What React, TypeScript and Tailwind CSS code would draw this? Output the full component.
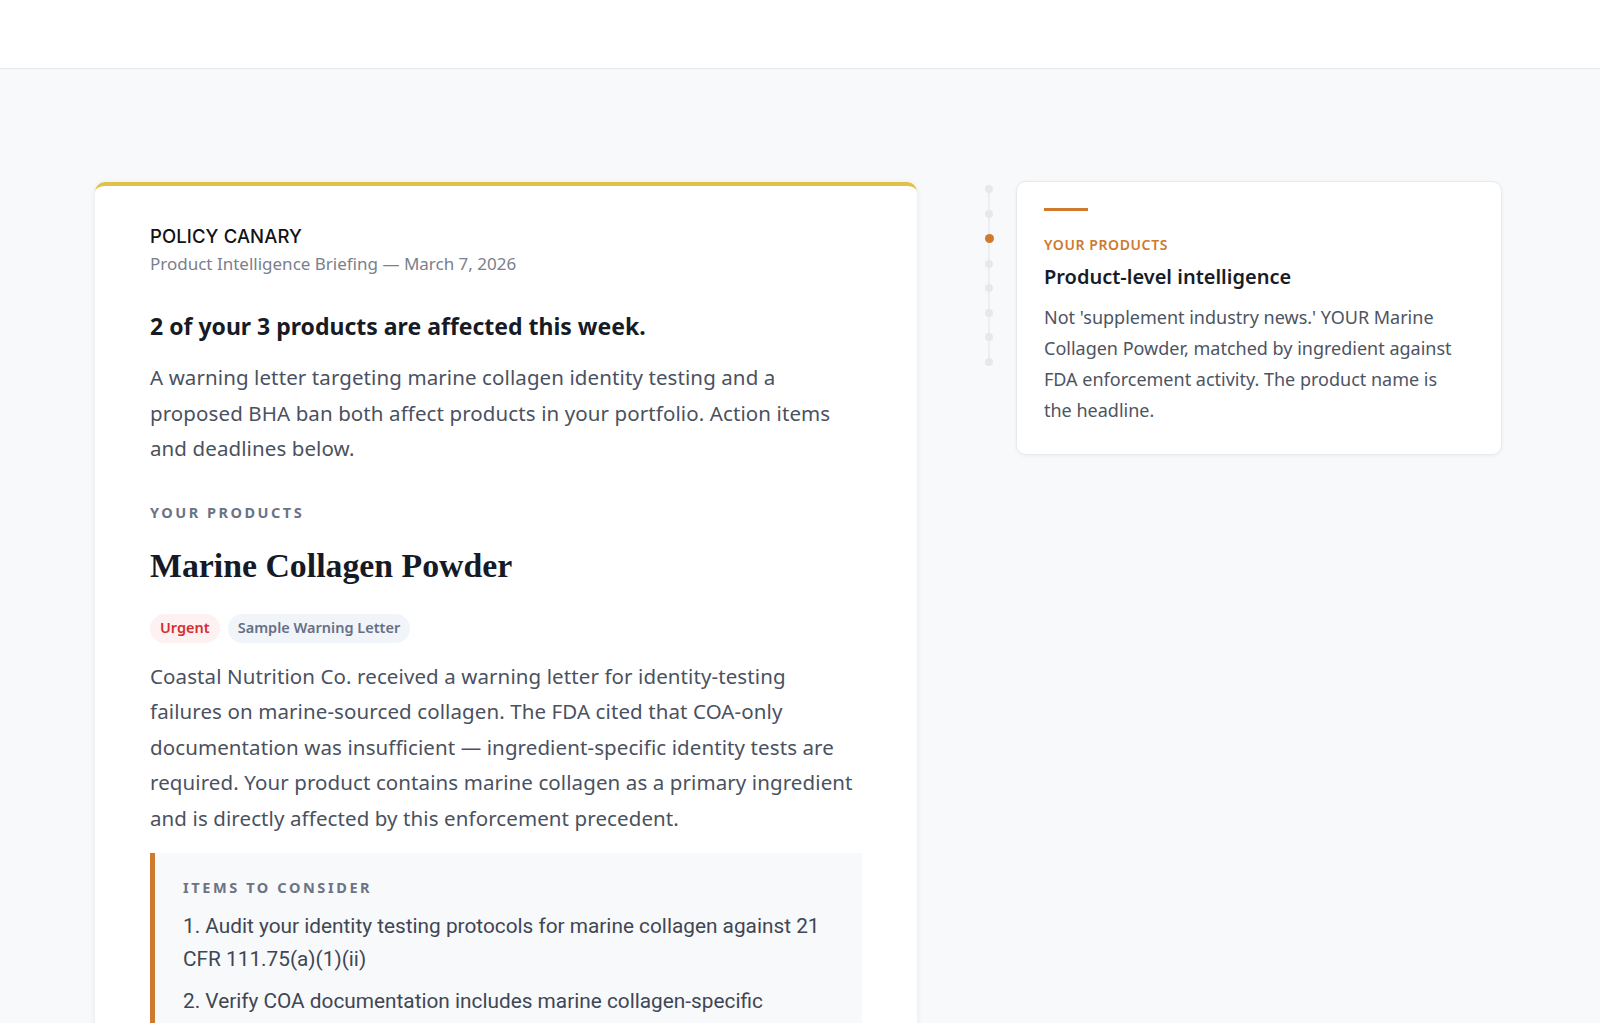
import React from "react"

const sans = "font-['Noto_Sans','Open_Sans',sans-serif]"

const steps = [0, 1, 2, 3, 4, 5, 6, 7]

function Timeline({ active }: { active: number }) {
  return (
    <div className="relative flex w-[12px] flex-col items-center gap-[16.5px]">
      <div className="absolute top-[4px] bottom-[4px] left-[5px] w-[2px] bg-[#eceef1]" />
      {steps.map((i) => (
        <div
          key={i}
          className={
            i === active
              ? "relative z-10 h-[9px] w-[9px] rounded-full bg-[#cf7a2c]"
              : "relative z-10 h-[8px] w-[8px] rounded-full bg-[#e6e8eb]"
          }
        />
      ))}
    </div>
  )
}

function Badge({ tone, children }: { tone: "red" | "slate"; children: React.ReactNode }) {
  const cls =
    tone === "red"
      ? "bg-[#fdf1f1] text-[#d32f2f]"
      : "bg-[#f1f4f8] text-[#667085]"
  return (
    <span className={`inline-flex h-[29px] items-center rounded-full px-[10px] text-[14.5px] font-semibold ${cls}`}>
      {children}
    </span>
  )
}

export default function App() {
  return (
    <div className={`min-h-screen bg-[#f8f9fb] ${sans}`}>
      <header className="h-[69px] border-b border-[#e5e8eb] bg-white" />

      <main className="flex items-start pt-[113px] pl-[95px]">
        {/* briefing card */}
        <article className="w-[822px] rounded-[10px] border-t-4 border-[#e2c14b] bg-white px-[55px] pt-[37px] pb-16 shadow-[0_1px_6px_rgba(16,24,40,0.08)]">
          <div className="font-['Inter',sans-serif] text-[18.5px] font-medium leading-[26px] tracking-[0.1px] text-[#111318]">
            POLICY CANARY
          </div>
          <p className="mt-[2px] text-[17px] leading-[26px] text-[#7a808c]">
            Product Intelligence Briefing — March 7, 2026
          </p>

          <h2 className="mt-[33px] text-[23px] font-bold leading-[32px] text-[#161b26]">
            2 of your 3 products are affected this week.
          </h2>
          <p className="mt-[18px] text-[20.5px] leading-[35.5px] tracking-[0.1px] text-[#4a5160]">
            A warning letter targeting marine collagen identity testing and a proposed BHA ban both affect
            products in your portfolio. Action items and deadlines below.
          </p>

          <div className="mt-[35px] text-[14.5px] font-bold leading-[20px] tracking-[2.5px] text-[#6b7384]">
            YOUR PRODUCTS
          </div>
          <h3 className="mt-[24px] font-['Liberation_Serif',serif] text-[33.8px] font-bold leading-[40px] text-[#151a26]">
            Marine Collagen Powder
          </h3>

          <div className="mt-[28px] flex gap-[8px]">
            <Badge tone="red">Urgent</Badge>
            <Badge tone="slate">Sample Warning Letter</Badge>
          </div>

          <p className="mt-[16px] text-[20.5px] leading-[35.5px] tracking-[0.1px] text-[#4a5160]">
            Coastal Nutrition Co. received a warning letter for identity-testing failures on marine-sourced
            collagen. The FDA cited that COA-only documentation was insufficient — ingredient-specific identity
            tests are required. Your product contains marine collagen as a primary ingredient and is directly
            affected by this enforcement precedent.
          </p>

          <div className="mt-[17px] border-l-[5px] border-[#cd7a2c] bg-[#f8f9fb] pt-[24px] pr-[36px] pb-6 pl-[28px]">
            <div className="text-[14.5px] font-bold leading-[20px] tracking-[2.6px] text-[#6b7384]">
              ITEMS TO CONSIDER
            </div>
            <ol className="mt-[13px] flex flex-col gap-[9px] font-['Roboto',sans-serif] text-[20.8px] leading-[33px] text-[#3f4654]">
              <li>1. Audit your identity testing protocols for marine collagen against 21 CFR 111.75(a)(1)(ii)</li>
              <li>2. Verify COA documentation includes marine collagen-specific identity test results</li>
              <li>3. Confirm your supplier qualification records reference species and source</li>
            </ol>
          </div>
        </article>

        <div className="ml-[66px] pt-[3px]">
          <Timeline active={2} />
        </div>

        {/* feature note */}
        <aside className="-mt-px ml-[21px] w-[486px] rounded-[10px] border border-[#e8eaee] bg-white pt-[26px] pr-[40px] pb-[28px] pl-[27px] shadow-[0_1px_4px_rgba(16,24,40,0.05)]">
          <div className="h-[3px] w-[44px] bg-[#cf7a2c]" />
          <div className="mt-[24px] text-[14px] font-semibold leading-[20px] tracking-[0.6px] text-[#cc7a2e]">
            YOUR PRODUCTS
          </div>
          <h4 className="mt-[8px] text-[20px] font-semibold leading-[28px] text-[#171c27]">
            Product-level intelligence
          </h4>
          <p className="mt-[11px] text-[18px] leading-[31px] text-[#4d5462]">
            Not 'supplement industry news.' YOUR Marine Collagen Powder, matched by ingredient against FDA
            enforcement activity. The product name is the headline.
          </p>
        </aside>
      </main>
    </div>
  )
}
